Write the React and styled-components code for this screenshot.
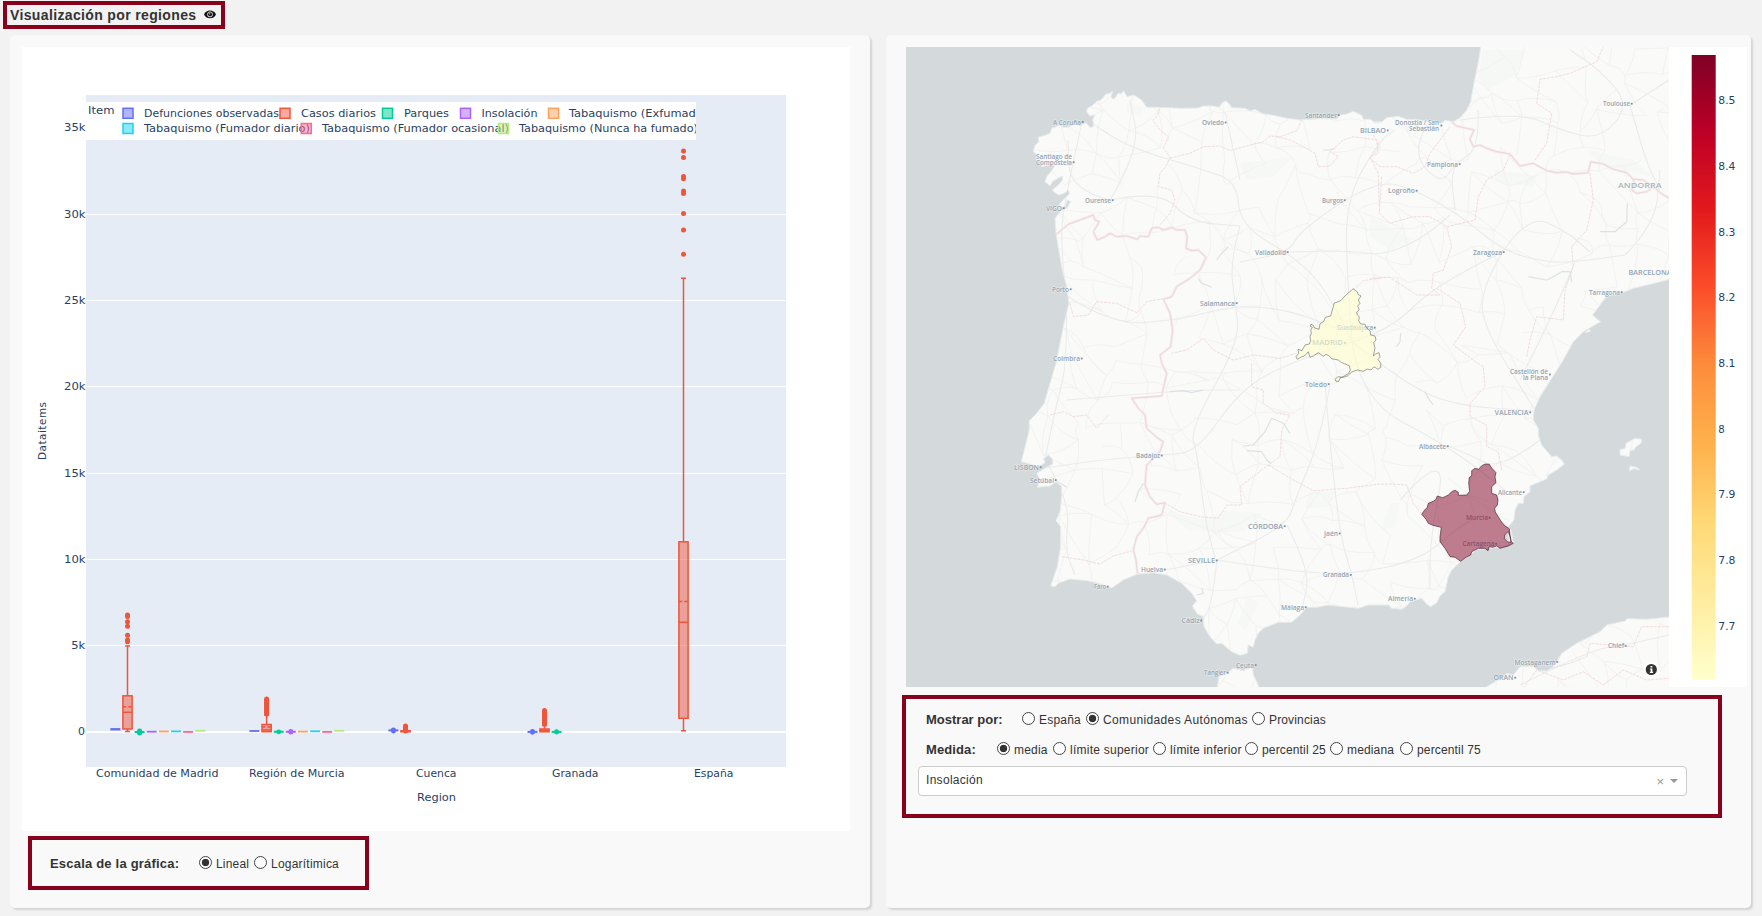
import React from "react";
import styled, { createGlobalStyle } from "styled-components";

const GlobalStyle = createGlobalStyle`
  * { box-sizing: border-box; }
  body {
    margin: 0;
    background: #f2f2f2;
    color: #333;
    font-family: "Liberation Sans", Arial, sans-serif;
    overflow: hidden;
  }
  svg { display: block; }
`;

const CRIMSON = "#88001b";

const Page = styled.main`
  width: 1762px;
  height: 916px;
  display: flex;
  flex-direction: column;
`;

const TitleBox = styled.header`
  display: flex;
  align-items: center;
  gap: 8px;
  width: 222px;
  height: 28px;
  margin: 1px 0 6px 3px;
  padding-left: 3px;
  border: 4px solid ${CRIMSON};
`;

const Title = styled.h1`
  margin: 0;
  width: 186px;
  font-size: 14px;
  line-height: 18px;
  font-weight: 700;
  letter-spacing: 0.36px;
  white-space: nowrap;
`;

const Columns = styled.div`
  display: flex;
  gap: 16px;
  padding-left: 10px;
`;

const Card = styled.section`
  width: ${(p) => p.$width}px;
  height: 873px;
  padding: 12px 0 0 ${(p) => p.$pad}px;
  border-radius: 5px;
  background: #f9f9f9;
  box-shadow: 2px 2px 2px lightgrey;
`;

const ChartPanel = styled.div`
  width: 828px;
  height: 784px;
  background: #fff;
`;

const MapPanel = styled.div`
  display: flex;
  width: 841px;
  height: 640px;
  background: #fff;
`;

const OptionsBox = styled.div`
  width: ${(p) => p.$width}px;
  height: ${(p) => p.$height}px;
  margin: ${(p) => p.$margin};
  padding: ${(p) => p.$padding};
  border: 4px solid ${CRIMSON};
`;

const OptionRow = styled.div`
  display: flex;
  align-items: center;
  height: 30px;
`;

const RowLabel = styled.span`
  width: ${(p) => p.$width}px;
  padding-left: ${(p) => p.$inset || 0}px;
  font-size: 13px;
  font-weight: 700;
  letter-spacing: ${(p) => p.$spacing || 0}px;
  white-space: nowrap;
`;

const Option = styled.label`
  display: flex;
  align-items: center;
  gap: 4px;
  width: ${(p) => p.$width}px;
  font-size: 12px;
  letter-spacing: ${(p) => p.$spacing || 0}px;
  white-space: nowrap;
  span { padding-top: 2px; }
`;

const Dot = styled.i`
  flex: none;
  width: 13px;
  height: 13px;
  margin-bottom: 2px;
  border: 1px solid #444;
  border-radius: 50%;
  background: ${(p) => (p.$on ? "radial-gradient(circle, #333 0 3.4px, #fff 4.1px)" : "#fff")};
`;

const Select = styled.div`
  display: flex;
  align-items: center;
  width: 769px;
  height: 30px;
  margin-top: 2px;
  padding: 0 8px 0 7px;
  border: 1px solid #ccc;
  border-radius: 4px;
  background: #fff;
  font-size: 12px;
`;

const SelectValue = styled.span`
  flex: 1;
  padding-bottom: 3px;
  letter-spacing: 0.3px;
`;

const Clear = styled.span`
  margin-right: 6px;
  color: #999;
  font-size: 13px;
  line-height: 13px;
`;

const Arrow = styled.span`
  border: 4px solid transparent;
  border-top-color: #999;
  border-bottom-width: 0;
`;

function Radio({ text, width, on, spacing }) {
  return (
    <Option $width={width} $spacing={spacing}>
      <Dot $on={on} />
      <span>{text}</span>
    </Option>
  );
}

/* ---------- box plot ---------- */

const INK = "#2a3f5f";
const PLOT_FONT = '"DejaVu Sans", Verdana, sans-serif';
const C = {
  blue: "#636efa", red: "#ef553b", green: "#00cc96", purple: "#ab63fa",
  orange: "#ffa15a", cyan: "#19d3f3", pink: "#ff6692", lime: "#b6e880",
};

function Txt({ x, y, w, size = 9.7, children, anchor = "start", fill = INK, adjust = "spacingAndGlyphs", ...rest }) {
  return (
    <text x={x} y={y} textLength={w} lengthAdjust={adjust} textAnchor={anchor}
      fontFamily={PLOT_FONT} fontSize={size} fill={fill} {...rest}>
      {children}
    </text>
  );
}

function Box({ x, color, top, bottom, median, mean, lo, hi, dots = [] }) {
  const l = x - 4.6;
  const w = 9.2;
  return (
    <g stroke={color} strokeWidth="1.5" fill="none">
      {hi && <path d={`M${x} ${top}V${hi}M${x - 2.5} ${hi}h5`} />}
      {lo && <path d={`M${x} ${bottom}V${lo}M${x - 2.5} ${lo}h5`} />}
      <rect x={l} y={top} width={w} height={bottom - top} fill={color} fillOpacity="0.5" />
      {median && <path d={`M${l} ${median}h${w}`} />}
      {mean && <path d={`M${l} ${mean}h${w}`} strokeDasharray="3.4 2" />}
      {dots.map((d) => <circle key={d} cx={x} cy={d} r="2.5" fill={color} stroke="none" />)}
    </g>
  );
}

function Flat({ x, y, color, h = 1.8, peak = 0 }) {
  return (
    <g fill={color}>
      <rect x={x - 5} y={y - h / 2} width="10" height={h} />
      {peak > 0 && <rect x={x - 2.5} y={y - peak} width="5" height={peak * 2} rx="2.4" />}
    </g>
  );
}

const range = (a, b, s) => Array.from({ length: Math.floor((b - a) / s) + 1 }, (_, i) => a + i * s);

const LEGEND = [
  [128, 113.3, C.blue, "Defunciones observadas", 144, 135],
  [285, 113.3, C.red, "Casos diarios", 301, 75],
  [387.5, 113.3, C.green, "Parques", 404, 45],
  [465.5, 113.3, C.purple, "Insolación", 481.5, 56],
  [553.5, 113.3, C.orange, "Tabaquismo (Exfumador)", 569, 143],
  [128, 128.5, C.cyan, "Tabaquismo (Fumador diario)", 144, 166],
  [306.3, 128.5, C.pink, "Tabaquismo (Fumador ocasional)", 322, 187],
  [503.4, 128.5, C.lime, "Tabaquismo (Nunca ha fumado)", 519, 179],
];

const FLATS = [
  [115.4, 729.3, C.blue, 2.4], [139.6, 732, C.green, 2, 3.6], [151.7, 731.7, C.purple], [163.9, 731.5, C.orange],
  [176, 731.4, C.cyan], [188.1, 731.9, C.pink], [200.3, 730.8, C.lime],
  [254.4, 731, C.blue], [278.7, 731.8, C.green, 2, 2.4], [290.8, 731.8, C.purple, 2, 2.8], [302.9, 731.6, C.orange],
  [315.1, 731.3, C.cyan], [327.2, 731.9, C.pink], [339.3, 730.8, C.lime],
  [393.4, 730.4, C.blue, 2, 3], [532.5, 731.9, C.blue, 2, 2.8], [556.6, 731.9, C.green, 2, 2.6],
];

function BoxPlot() {
  return (
    <svg width="828" height="784" viewBox="22 47 828 784">
      <clipPath id="legendClip"><rect x="86" y="102" width="610" height="38" /></clipPath>
      <rect x="86" y="95" width="700" height="672" fill="#e5ecf6" />
      {[645.5, 559.5, 473, 386, 300.5, 214.5].map((y) => (
        <rect key={y} x="86" y={Math.floor(y)} width="700" height="1" fill="#fff" />
      ))}
      <rect x="86" y="731" width="700" height="2" fill="#fff" />

      {FLATS.map(([x, y, color, h, peak]) => <Flat key={x} x={x} y={y} color={color} h={h} peak={peak} />)}
      <Box x={127.5} color={C.red} top={695.8} bottom={729} median={712.3} mean={706.7} hi={646} lo={731.4}
        dots={[615, 616.4, 621.7, 626.3, 635.2, 640, 641.8]} />
      <Box x={266.6} color={C.red} top={724.5} bottom={731.7} median={730} mean={727} hi={715} dots={range(699, 714, 1.5)} />
      <Box x={405.5} color={C.red} top={730.8} bottom={731.8} dots={range(726, 731, 1)} />
      <Box x={544.5} color={C.red} top={729} bottom={731.8} median={730.4} hi={725.5} dots={range(710.5, 724, 1.5)} />
      <Box x={683.5} color={C.red} top={541.8} bottom={718.3} median={622.3} mean={601.4} hi={278.3} lo={730.8}
        dots={[151, 157.4, 176.4, 178.8, 191, 193.5, 213.6, 229.9, 254.3]} />

      <g clipPath="url(#legendClip)">
        <rect x="86" y="102" width="610" height="38" fill="#fff" />
        <Txt x={88} y={114} w={26.5}>Item</Txt>
        {LEGEND.map(([, y, , label, tx, w]) => <Txt key={label} x={tx} y={y + 3.7} w={w}>{label}</Txt>)}
        {LEGEND.map(([x, y, color, label]) => (
          <rect key={label} x={x - 5} y={y - 5} width="10" height="10" fill={color} fillOpacity="0.5" stroke={color} strokeWidth="1.5" />
        ))}
      </g>

      <Txt x={64} y={131.2} w={21.5}>35k</Txt>
      {[["30k", 214.5], ["25k", 300.5], ["20k", 386.5], ["15k", 473], ["10k", 559.3]].map(([t, y]) => (
        <Txt key={t} x={64} y={y + 3.6} w={21.5}>{t}</Txt>
      ))}
      <Txt x={71.3} y={649.1} w={14}>5k</Txt>
      <Txt x={78} y={735.2} w={7}>0</Txt>

      <Txt x={96} y={777.2} w={122.5}>Comunidad de Madrid</Txt>
      <Txt x={249} y={777.2} w={95.5}>Región de Murcia</Txt>
      <Txt x={416} y={777.2} w={40.5}>Cuenca</Txt>
      <Txt x={552} y={777.2} w={46.5}>Granada</Txt>
      <Txt x={694} y={777.2} w={39.5}>España</Txt>
      <Txt x={417} y={801} w={39} size={10.8}>Region</Txt>
      <Txt x={0} y={0} w={58} size={10.4} adjust="spacing" transform="translate(46.3 460) rotate(-90)">Dataitems</Txt>
    </svg>
  );
}

/* ---------- map ---------- */

// Every piece lists points at three units per pixel, relative to its own origin.
const pts = (ox, oy, list) => {
  const out = [];
  for (let i = 0; i < list.length; i += 2) out.push([ox + list[i] / 3, oy + list[i + 1] / 3]);
  return out;
};
const NW = [1000, 40];
const NE = [1370, 40];
const SW = [1000, 360];
const SE = [1370, 360];
const line = (...parts) =>
  "M" + parts.flatMap(([o, l]) => pts(o[0], o[1], l)).map((p) => p.map((n) => n.toFixed(1)).join(" ")).join("L");

const MAINLAND = line(
  [NE, [331, 10, 331, 30, 326, 60, 318, 100, 308, 150, 302, 185, 290, 210, 272, 232, 250, 245, 225, 241, 214, 250, 190, 245, 150, 240, 110, 238, 85, 229, 50, 233, 35, 246, 10, 245]],
  [NW, [1140, 248, 1123, 248, 1112, 238, 1090, 238, 1085, 226, 1060, 214, 1040, 222, 1020, 225, 1010, 237, 960, 236, 900, 240, 860, 235, 820, 226, 790, 222, 775, 214, 765, 208, 750, 213, 735, 205, 695, 203, 688, 192, 678, 182, 665, 190, 658, 202, 640, 198, 610, 198, 595, 204, 540, 205, 480, 202, 440, 202, 432, 190, 425, 180, 410, 170, 400, 165, 382, 170, 370, 152, 364, 162, 354, 160, 347, 172, 339, 178, 333, 170, 338, 154, 325, 162, 318, 162, 308, 174, 303, 180, 290, 184, 275, 198, 262, 205, 260, 216, 270, 228, 285, 224, 278, 240, 282, 256, 272, 264, 258, 248, 240, 256, 225, 252, 205, 262, 190, 262, 180, 256, 155, 265, 150, 280, 135, 286, 115, 292, 116, 305, 104, 318, 100, 335, 112, 345, 108, 360, 125, 365, 125, 380, 145, 375, 165, 376, 155, 392, 140, 410, 135, 425, 150, 438, 158, 424, 174, 415, 187, 408, 188, 420, 175, 435, 157, 450, 165, 458, 177, 465, 195, 458, 205, 450, 208, 462, 195, 475, 180, 490, 170, 507, 195, 500, 202, 480, 212, 485, 200, 505, 182, 513, 165, 535, 168, 580, 178, 640, 187, 690, 200, 740, 207, 790, 192, 850, 182, 900, 170, 960]],
  [SW, [168, 10, 150, 70, 133, 130, 110, 160, 88, 182, 88, 210, 78, 250, 64, 305, 90, 312, 115, 320, 135, 308, 131, 296, 145, 285, 158, 298, 158, 312, 130, 328, 110, 340, 120, 358, 112, 382, 150, 378, 168, 365, 185, 380, 185, 410, 180, 455, 168, 482, 182, 500, 182, 560, 172, 620, 152, 678, 165, 680, 175, 670, 210, 657, 260, 662, 290, 668, 312, 676, 335, 684, 370, 660, 410, 643, 460, 638, 500, 645, 545, 670, 575, 700, 590, 722, 577, 738, 592, 762, 610, 770, 612, 800, 630, 830, 650, 852, 665, 850, 695, 875, 720, 886, 742, 880, 745, 855, 760, 862, 765, 840, 775, 820, 790, 805, 835, 787, 875, 787, 900, 765, 920, 742, 950, 742, 985, 735, 1030, 740, 1075, 745, 1105, 735]],
  [SE, [0, 735, 55, 735, 65, 745, 95, 748, 110, 738, 120, 725, 155, 715, 170, 732, 182, 740, 200, 728, 210, 708, 225, 695, 235, 650, 245, 630, 272, 604, 300, 585, 320, 568, 360, 565, 400, 560, 430, 548, 423, 510, 415, 500, 432, 480, 435, 450, 445, 430, 460, 430, 462, 410, 480, 395, 480, 378, 510, 365, 530, 357, 535, 345, 560, 330, 583, 313, 575, 300, 560, 288, 545, 290, 515, 255, 505, 225, 505, 205, 490, 180, 492, 150, 510, 110, 545, 55]],
  [NE, [580, 960, 610, 905, 640, 875, 665, 860, 692, 845, 680, 836, 668, 825, 690, 795, 710, 768, 760, 757, 790, 745, 860, 728, 910, 715, 910, 10]]
) + "Z";
const TANGIER = line([SW, [650, 995, 657, 950, 680, 940, 700, 925, 730, 932, 757, 920, 760, 945, 775, 975, 775, 995]]) + "Z";
const ALGERIA = line([SE, [335, 990, 370, 968, 395, 955, 410, 940, 430, 945, 450, 920, 490, 920, 505, 932, 530, 933, 548, 922, 560, 905, 575, 880, 620, 850, 690, 815, 710, 795, 765, 783, 772, 776, 830, 778, 910, 770, 910, 990]]) + "Z";
const IBIZA = line([SE, [750, 285, 750, 268, 765, 266, 768, 250, 795, 235, 815, 238, 813, 250, 798, 260, 792, 270, 780, 272, 778, 290]]) + "Z";
const FORMENTERA = line([SE, [778, 332, 780, 318, 800, 322, 810, 330, 792, 326]]) + "Z";
const EBRO_ISLE = line([NE, [645, 878, 655, 868, 663, 874]]) + "Z";
const LAND = [MAINLAND, TANGIER, ALGERIA, IBIZA, FORMENTERA, EBRO_ISLE].join("");

const MADRID = line([[1270, 270], [250, 56, 262, 66, 265, 74, 273, 78, 265, 90, 270, 100, 263, 108, 268, 120, 260, 126, 262, 135, 268, 140, 266, 152, 272, 162, 285, 163, 290, 175, 300, 182, 302, 195, 315, 198, 318, 210, 311, 218, 315, 235, 310, 258, 317, 252, 327, 248, 330, 262, 324, 268, 332, 280, 332, 292, 324, 298, 312, 290, 303, 300, 292, 297, 280, 304, 262, 300, 245, 306, 232, 318, 220, 322, 212, 322, 206, 334, 198, 334, 195, 328, 204, 320, 216, 322, 236, 310, 241, 300, 238, 287, 228, 283, 215, 278, 205, 270, 185, 266, 178, 258, 168, 253, 160, 259, 145, 248, 130, 258, 120, 262, 115, 245, 106, 256, 92, 262, 82, 268, 78, 260, 86, 250, 84, 238, 96, 242, 105, 225, 118, 222, 122, 212, 120, 200, 124, 190, 122, 180, 127, 172, 120, 168, 123, 163, 131, 167, 132, 173, 147, 178, 150, 162, 162, 153, 166, 142, 182, 138, 190, 110, 192, 100, 212, 92, 225, 78]]) + "Z";
const MURCIA = line([[1400, 440], [65, 223, 74, 210, 82, 202, 85, 190, 100, 184, 108, 178, 112, 168, 128, 173, 145, 165, 157, 154, 166, 151, 175, 157, 175, 166, 200, 165, 209, 154, 206, 130, 208, 112, 215, 108, 215, 92, 225, 85, 236, 88, 245, 77, 256, 72, 268, 73, 275, 84, 288, 98, 285, 110, 288, 128, 275, 140, 275, 160, 290, 165, 294, 180, 292, 195, 284, 205, 286, 216, 302, 242, 313, 256, 328, 266, 330, 285, 334, 305, 340, 310, 325, 318, 300, 325, 290, 318, 278, 322, 268, 320, 264, 332, 255, 325, 235, 325, 215, 335, 212, 345, 198, 352, 182, 364, 165, 352, 150, 350, 135, 325, 120, 305, 120, 290, 124, 262, 98, 256, 85, 250, 78, 238]]) + "Z" +
  line([[1400, 440], [325, 274, 314, 285, 313, 295, 322, 305, 333, 307, 330, 290]]) + "Z";
const MAR_MENOR = line([[1400, 440], [325, 274, 314, 285, 313, 295, 322, 303, 327, 300, 325, 290]]) + "Z";

const BORDERS = [
  line([NW, [170, 582, 205, 553, 245, 538, 280, 525, 285, 540, 298, 545, 280, 575, 292, 600, 315, 590, 330, 580, 350, 590, 380, 588, 412, 598, 420, 588, 445, 590, 455, 565, 475, 562, 490, 570, 515, 562, 530, 570, 555, 570, 562, 590, 558, 625, 575, 632, 595, 630, 618, 652, 600, 690, 570, 715, 530, 740, 515, 770, 490, 778, 510, 820, 518, 870, 512, 920, 480, 945]],
    [SW, [485, 10, 500, 40, 485, 108, 395, 115, 415, 145, 435, 165, 440, 205, 470, 232, 490, 245, 480, 275, 440, 315, 435, 375, 450, 410, 470, 433, 495, 428, 485, 465, 445, 475, 430, 505, 410, 530, 400, 570, 408, 600, 413, 643]]),
  line([NE, [245, 246, 260, 258, 290, 265, 312, 270, 300, 298, 310, 320, 330, 315, 350, 325, 380, 335, 420, 342, 450, 378, 490, 370, 530, 392, 560, 398, 590, 396, 610, 402, 655, 398, 662, 365, 700, 372, 730, 388, 770, 398, 790, 418, 820, 420, 850, 440, 880, 465, 900, 475]]),
  line([NE, [785, 412, 795, 430, 785, 450, 800, 460, 830, 455, 850, 440]]),
];
const REGIONS = [
  line([NW, [480, 205, 470, 230, 458, 240, 480, 270, 505, 290, 490, 325, 510, 350, 500, 375, 480, 400, 475, 440, 515, 450, 525, 480, 510, 520, 480, 555]]),
  line([NW, [510, 355, 570, 340, 610, 320, 660, 318, 690, 332, 740, 318, 790, 305, 810, 288, 840, 290, 890, 272, 905, 240]]),
  line([NW, [830, 290, 870, 300, 910, 320, 945, 340, 955, 380, 990, 378, 1015, 350, 990, 335, 1030, 300, 1060, 290, 1130, 300, 1135, 340, 1110, 350, 1135, 400, 1138, 500]]),
  line([NE, [10, 285, 30, 320, 0, 355, 30, 380, 80, 380, 130, 400, 165, 380, 180, 340, 210, 300, 240, 260]]),
  line([NE, [35, 410, 28, 520, 60, 550, 130, 530, 180, 530, 230, 560, 245, 620, 220, 690, 190, 700, 185, 745, 210, 765, 140, 765, 60, 712, 0, 715]]),
  line([NE, [200, 745, 270, 790, 287, 860, 250, 915, 310, 960]], [SE, [340, 20, 345, 80, 300, 130, 300, 170, 350, 195, 350, 260, 385, 275, 395, 330]]),
  line([NE, [420, 345, 400, 390, 350, 420, 325, 470, 315, 540, 230, 560]]),
  line([NE, [660, 400, 670, 480, 650, 570, 605, 620, 610, 680, 585, 750, 580, 840, 500, 830, 480, 900, 470, 950]]),
  line([NE, [495, 360, 530, 310, 545, 220, 500, 190, 510, 118, 560, 110, 600, 100, 680, 65, 700, 20]]),
  line([NW, [1140, 715, 1090, 722, 1060, 750]]),
  line([NW, [890, 940, 840, 955, 760, 945, 700, 960, 640, 930, 610, 895, 560, 930, 515, 940]]),
  line([NW, [210, 790, 220, 830, 265, 825, 290, 785, 350, 790, 410, 818, 440, 785, 495, 775]]),
  line([SW, [755, 10, 755, 80, 790, 90, 790, 130, 830, 160, 870, 165, 845, 210, 840, 290, 805, 315, 720, 380, 725, 435, 680, 435, 655, 475, 600, 470, 540, 455, 495, 430]]),
  line([SW, [805, 315, 880, 360, 940, 392, 1040, 385, 1140, 372]], [SE, [60, 372, 110, 375, 130, 430, 155, 462]]),
  line([SW, [185, 590, 250, 600, 300, 612, 340, 588, 398, 572]]),
  line([SW, [150, 165, 190, 155, 220, 170, 260, 165, 290, 205, 325, 165]]),
  line([SE, [545, 925, 600, 910, 650, 890, 660, 850, 720, 855, 790, 860, 815, 800, 900, 800]]),
  line([SE, [460, 985, 500, 930, 580, 960, 640, 935, 700, 975, 760, 930, 830, 960, 900, 955]]),
];

const ROADS = [
  [1352, 342, 1333, 300, 1300, 260, 1240, 226, 1237, 182, 1205, 170, 1130, 148, 1090, 122],
  [1240, 180, 1228, 125, 1225, 112], [1240, 226, 1230, 262, 1235, 302, 1240, 340, 1190, 430, 1197, 452, 1205, 520, 1215, 558],
  [1352, 342, 1348, 290, 1345, 200, 1380, 140, 1395, 130], [1345, 200, 1300, 230, 1290, 252, 1240, 262],
  [1290, 252, 1350, 250, 1380, 256, 1420, 240, 1450, 215], [1345, 200, 1380, 180, 1415, 190, 1460, 215, 1503, 251, 1545, 262, 1575, 262, 1625, 255],
  [1503, 251, 1528, 215, 1565, 230, 1590, 252], [1503, 251, 1480, 290, 1485, 330, 1535, 410],
  [1352, 342, 1390, 330, 1430, 290, 1503, 251], [1352, 342, 1400, 380, 1450, 405, 1533, 411], [1352, 342, 1360, 400, 1448, 446, 1505, 490],
  [1352, 342, 1290, 362, 1240, 390, 1197, 452, 1162, 455, 1100, 460, 1045, 468], [1330, 385, 1320, 440, 1295, 500, 1287, 525, 1217, 560],
  [1325, 384, 1330, 445, 1340, 535, 1352, 575, 1358, 605], [1287, 525, 1310, 570, 1303, 605], [1217, 560, 1280, 570, 1350, 575, 1420, 560, 1455, 530, 1480, 515],
  [1217, 560, 1165, 570, 1135, 575], [1217, 560, 1212, 605, 1202, 620], [1066, 295, 1068, 360, 1055, 410, 1045, 460],
  [1066, 295, 1060, 240, 1065, 200, 1082, 122], [1066, 295, 1110, 325, 1180, 320, 1235, 305, 1290, 310, 1340, 330],
  [1110, 200, 1140, 150, 1130, 100], [1110, 200, 1070, 190, 1068, 140], [1110, 200, 1160, 190, 1190, 222, 1240, 226],
  [1045, 460, 1070, 500, 1065, 550, 1075, 575], [1066, 400, 1130, 395, 1190, 390, 1240, 390],
  [1460, 120, 1520, 112, 1560, 130, 1600, 140, 1630, 105, 1600, 70, 1570, 50], [1630, 105, 1645, 160, 1660, 190], [1630, 105, 1669, 80],
  [1478, 110, 1480, 150, 1450, 165, 1455, 210], [1625, 255, 1655, 225, 1660, 170], [1575, 262, 1555, 310, 1520, 380],
  [1540, 440, 1500, 470, 1470, 455, 1448, 446], [1400, 500, 1448, 446, 1430, 540, 1430, 590],
  [1430, 120, 1410, 150, 1440, 185, 1455, 165], [1520, 685, 1590, 650, 1625, 645, 1669, 635],
];
const curve = (a) => {
  let d = `M${a[0]} ${a[1]}`;
  for (let i = 2; i < a.length - 2; i += 2) d += `Q${a[i]} ${a[i + 1]} ${(a[i] + a[i + 2]) / 2} ${(a[i + 1] + a[i + 3]) / 2}`;
  return d + `L${a[a.length - 2]} ${a[a.length - 1]}`;
};

// Minor roads: a jittered lattice with seeded noise, so it is the same on every render.
const rnd = (i, j, k) => {
  const s = Math.sin(i * 127.1 + j * 311.7 + k * 74.7) * 43758.5453;
  return s - Math.floor(s);
};
const STEP = 27;
const node = (i, j) => [906 + i * STEP + (rnd(i, j, 1) - 0.5) * 24, 40 + j * STEP + (rnd(i, j, 2) - 0.5) * 24];
const MINOR = [];
for (let i = 0; i < 29; i++) {
  for (let j = 0; j < 25; j++) {
    const a = node(i, j);
    [[1, 0], [0, 1], [1, 1]].forEach(([di, dj], k) => {
      if (rnd(i, j, k + 5) > [0.65, 0.65, 0.3][k]) return;
      const b = node(i + di, j + dj);
      const mx = (a[0] + b[0]) / 2 + (rnd(i, j, k + 9) - 0.5) * 12;
      const my = (a[1] + b[1]) / 2 + (rnd(i, j, k + 13) - 0.5) * 12;
      MINOR.push(`M${a[0].toFixed(1)} ${a[1].toFixed(1)}Q${mx.toFixed(1)} ${my.toFixed(1)} ${b[0].toFixed(1)} ${b[1].toFixed(1)}`);
    });
  }
}

const FORESTS = [
  [SW, [490, 440, 560, 470, 620, 478, 680, 450, 790, 460, 730, 515, 640, 515, 560, 510]],
  [SW, [930, 395, 1010, 395, 985, 440, 915, 445]],
  [SW, [740, 715, 775, 725, 735, 815, 715, 790]],
  [NE, [340, 30, 470, 30, 430, 110, 350, 150, 325, 110]],
  [NE, [650, 330, 790, 360, 850, 410, 780, 395, 690, 370]],
  [NE, [370, 390, 500, 405, 490, 440, 380, 425]],
  [NE, [0, 530, 60, 560, 130, 600, 60, 630, 0, 590]],
  [SE, [60, 430, 90, 430, 75, 500, 35, 510]],
  [NW, [380, 190, 430, 200, 420, 230, 380, 215]],
  [NW, [720, 370, 880, 350, 820, 410, 740, 420]],
];
const RIVERS = [
  line([SW, [730, 258, 760, 255, 795, 215, 815, 175, 850, 190, 870, 220]]),
  line([SW, [740, 272, 785, 275, 800, 300, 812, 310]]),
  line([SW, [510, 95, 550, 92, 575, 98, 610, 90]]),
  line([SW, [430, 370, 415, 395, 405, 425]]),
  line([NE, [475, 710, 530, 720, 550, 710, 575, 695, 600, 695, 605, 725]]),
  line([NE, [690, 575, 735, 575, 770, 545, 772, 490]]),
  line([NW, [650, 660, 665, 640, 685, 620]]),
  line([NW, [595, 715, 605, 730, 635, 742]]),
  line([NW, [970, 330, 990, 330, 1005, 325]]),
  line([NE, [80, 920, 90, 905, 92, 880]]),
  line([SW, [590, 705, 610, 700, 605, 685]]),
  line([SE, [165, 95, 175, 115, 190, 135]]),
  line([SW, [168, 365, 185, 372, 200, 382]]),
];

const TOWNS = [
  ["A Coruña", 1053, 124.5, 28], ["Santiago de", 1036, 158.6, 36, 0], ["Compostela", 1036, 164.7, 36], ["VIGO", 1046, 210.7, 16],
  ["Ourense", 1085, 202.7, 26], ["Oviedo", 1202, 125, 22], ["Santander", 1305, 117.6, 32], ["BILBAO", 1360, 132.9, 26],
  ["Burgos", 1322, 202.7, 21], ["Valladolid", 1255, 254.6, 31], ["Salamanca", 1200, 305.6, 35], ["Porto", 1052, 291.8, 17],
  ["Coimbra", 1053, 361, 27], ["Donostia / San", 1395, 125.2, 44, 0], ["Sebastián", 1409, 131.3, 30, 0], ["Pamplona", 1427, 166.7, 31],
  ["Logroño", 1388, 193.2, 27], ["Zaragoza", 1473, 254.6, 29], ["Toulouse", 1603, 106.2, 27], ["Tarragona", 1589, 294.6, 31],
  ["Guadalajara", 1337, 330.2, 36], ["Toledo", 1305, 386.6, 22], ["Badajoz", 1136, 458, 24], ["LISBON", 1014, 469.7, 25],
  ["Setúbal", 1030, 482.6, 24], ["CÓRDOBA", 1248, 528.7, 35], ["Jaén", 1324, 536, 14], ["SEVILLE", 1188, 563, 27],
  ["Huelva", 1141, 572, 22], ["Granada", 1323, 577.4, 26], ["Faro", 1094, 589, 12], ["Málaga", 1281, 609.7, 23],
  ["Cádiz", 1181.5, 623, 18], ["Ceuta", 1236, 667.6, 18], ["Tangier", 1204, 675.2, 22], ["Castellón de", 1510, 374, 38, 0],
  ["la Plana", 1523, 380.2, 25, 0], ["VALENCIA", 1494.5, 414.8, 34], ["Albacete", 1419, 448.7, 27], ["Alicante", 1498, 494.7, 24],
  ["Murcia", 1466, 520.2, 22], ["Cartagena", 1462.5, 546.2, 32], ["Almería", 1388, 601.2, 25], ["Chlef", 1608, 648.4, 16],
  ["Mostaganem", 1514.5, 664.5, 41], ["ORAN", 1493.5, 680.2, 20],
];

const TICKS = [["8.5", 100.4], ["8.4", 166.5], ["8.3", 232.3], ["8.2", 297.8], ["8.1", 363.8], ["8", 429.6], ["7.9", 494.8], ["7.8", 560.8], ["7.7", 626.6]];
const RAMP = ["#800026", "#bd0026", "#e31a1c", "#fc4e2a", "#fd8d3c", "#feb24c", "#fed976", "#ffeda0", "#ffffcc"];

function RegionMap() {
  return (
    <svg width="841" height="640" viewBox="906 47 841 640">
      <defs>
        <clipPath id="land"><path d={LAND} /></clipPath>
        <clipPath id="frame"><rect x="906" y="47" width="763" height="640" /></clipPath>
        <linearGradient id="ramp" x1="0" y1="0" x2="0" y2="1">
          {RAMP.map((c, i) => <stop key={c} offset={i / 8} stopColor={c} />)}
        </linearGradient>
      </defs>
      <g clipPath="url(#frame)">
        <rect x="906" y="47" width="763" height="640" fill="#d4dadc" />
        <path d={LAND} fill="#fafaf8" stroke="#e8ecec" strokeWidth="1" strokeLinejoin="round" />
        <g clipPath="url(#land)" fill="none">
          {FORESTS.map((f, i) => <path key={i} d={line(f) + "Z"} fill="#f6f8f6" />)}
          <path d={MINOR.join("")} stroke="#f1f1f1" strokeWidth="0.9" />
          {ROADS.map((r, i) => <path key={i} d={curve(r)} stroke="#eaebec" strokeWidth="1.1" />)}
          {REGIONS.map((r, i) => <path key={i} d={r} stroke="#f1d8dc" strokeWidth="0.9" strokeDasharray="3 1" strokeLinejoin="round" />)}
          {BORDERS.map((b, i) => (
            <g key={i} strokeLinejoin="round">
              <path d={b} stroke="#f5eaec" strokeWidth="2.6" />
              <path d={b} stroke="#ecd7da" strokeWidth="1" />
            </g>
          ))}
          {RIVERS.map((r, i) => <path key={i} d={r} stroke="#dce2e4" strokeWidth="1.2" strokeLinejoin="round" />)}
        </g>
        <path d={MAR_MENOR} fill="#d4dadc" />
        <g fontFamily='"Open Sans", sans-serif' fontWeight="600" fill="#93a3b3" stroke="#fafaf8" strokeOpacity="0.6" strokeWidth="1" paintOrder="stroke">
          {TOWNS.map(([name, x, y, w, dot]) => (
            <g key={name}>
              <text x={x} y={y} textLength={w} lengthAdjust="spacingAndGlyphs" fontSize="6.4">{name}</text>
              {dot !== 0 && <rect x={x + w + 0.8} y={y - 3.4} width="1.8" height="1.8" fill="#7f90a3" stroke="none" />}
            </g>
          ))}
          <rect x="1440.5" y="124.6" width="1.8" height="1.8" fill="#7f90a3" stroke="none" />
          <rect x="1549" y="373.6" width="1.8" height="1.8" fill="#7f90a3" stroke="none" />
          <text x="1312" y="345.4" textLength="31" lengthAdjust="spacingAndGlyphs" fontSize="7.4">MADRID</text>
          <rect x="1344" y="342" width="1.8" height="1.8" stroke="none" />
          <text x="1628.5" y="274.5" textLength="43" lengthAdjust="spacingAndGlyphs" fontSize="6.8">BARCELONA</text>
          <text x="1618" y="187.8" textLength="43.5" lengthAdjust="spacingAndGlyphs" fontSize="7.6" fill="#a9b6be">ANDORRA</text>
        </g>
        <path d={MADRID} fill="#ffffcc" fillOpacity="0.6" stroke="#444" strokeOpacity="0.6" strokeWidth="0.8" />
        <path d={MURCIA} fillRule="evenodd" fill="#800026" fillOpacity="0.5" stroke="#3a1020" strokeOpacity="0.65" strokeWidth="0.9" />
        <circle cx="1651.3" cy="669.5" r="8" fill="#fff" fillOpacity="0.5" />
        <circle cx="1651.3" cy="669.5" r="5.6" fill="#333" />
        <path d="M1650.5 666h1.9v1.5h-1.9zM1649.9 668.4h2.5v3.4h.7v1.1h-3.2v-1.1h.7v-2.3h-.7z" fill="#fff" />
      </g>
      <rect x="1691.7" y="55" width="24" height="624" fill="url(#ramp)" />
      {TICKS.map(([t, y]) => <Txt key={t} x={1718.3} y={y + 3.6} w={t.length > 1 ? 17.2 : 6.5}>{t}</Txt>)}
    </svg>
  );
}

function Eye() {
  return (
    <svg width="12" height="9" viewBox="0 0 12 9" transform="translate(0 -1)">
      <path d="M0 4.4C1.4 1.8 3.5.6 6 .6s4.600 1.200 6 3.800C10.600 7 8.500 8.200 6 8.200S1.400 7 0 4.400z" fill="#111" />
      <circle cx="6" cy="4.400" r="2.500" fill="none" stroke="#eee" strokeWidth="0.9" />
      <circle cx="5.600" cy="4" r="0.700" fill="#bbb" />
    </svg>
  );
}

export default function App() {
  return (
    <Page>
      <GlobalStyle />
      <TitleBox>
        <Title>Visualización por regiones</Title>
        <Eye />
      </TitleBox>
      <Columns>
        <Card $width={860} $pad={12}>
          <ChartPanel><BoxPlot /></ChartPanel>
          <OptionsBox $width={341} $height={54} $margin="5px 0 0 6px" $padding="8px 0 0 18px">
            <OptionRow>
              <RowLabel $width={149} $spacing={0.2}>Escala de la gráfica:</RowLabel>
              <Radio on text="Lineal" width={55} spacing={0.2} />
              <Radio text="Logarítimica" width={90} spacing={0.22} />
            </OptionRow>
          </OptionsBox>
        </Card>
        <Card $width={865} $pad={20}>
          <MapPanel><RegionMap /></MapPanel>
          <OptionsBox $width={820} $height={123} $margin="8px 0 0 -4px" $padding="5px 0 0 12px">
            <OptionRow>
              <RowLabel $width={104} $inset={8}>Mostrar por:</RowLabel>
              <Radio text="España" width={64} spacing={0.2} />
              <Radio on text="Comunidades Autónomas" width={166} spacing={0.36} />
              <Radio text="Provincias" width={80} spacing={0.15} />
            </OptionRow>
            <OptionRow>
              <RowLabel $width={79} $inset={8} $spacing={0.1}>Medida:</RowLabel>
              <Radio on text="media" width={56} spacing={0.2} />
              <Radio text="límite superior" width={100} spacing={0.25} />
              <Radio text="límite inferior" width={92} spacing={0.2} />
              <Radio text="percentil 25" width={85} spacing={0.15} />
              <Radio text="mediana" width={70} spacing={0.15} />
              <Radio text="percentil 75" width={90} spacing={0.15} />
            </OptionRow>
            <Select>
              <SelectValue>Insolación</SelectValue>
              <Clear>×</Clear>
              <Arrow />
            </Select>
          </OptionsBox>
        </Card>
      </Columns>
    </Page>
  );
}
